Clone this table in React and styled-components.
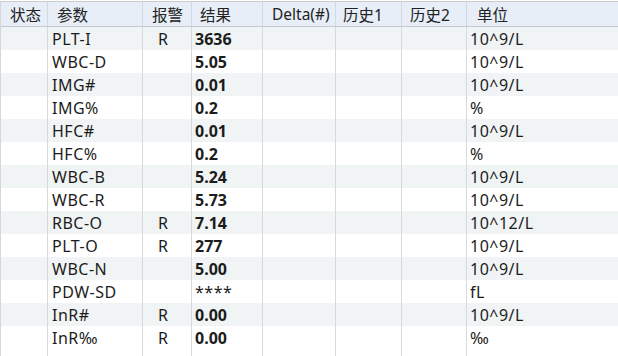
import React from "react";
import styled, { createGlobalStyle } from "styled-components";

const GlobalStyle = createGlobalStyle`
  html, body {
    margin: 0;
    padding: 0;
    background: #ffffff;
  }
  body {
    font-family: "Noto Sans", "Noto Sans CJK SC", sans-serif;
    color: #1c1c1c;
  }
`;

const COLS = "47px 95px 49px 71px 73px 66px 65px 1fr";

const Grid = styled.div`
  display: flex;
  flex-direction: column;
  width: 618px;
  height: 355px;
  overflow: hidden;
  border-top: 1px solid #c9cdd1;
  border-left: 1px solid #d3d7db;
  box-sizing: border-box;
  margin-top: 1px;
`;

const HeaderRow = styled.div`
  display: grid;
  grid-template-columns: ${COLS};
  flex: 0 0 24px;
  background: #e7eef8;
  border-bottom: 1px solid #c3c8cc;
`;

const HeadCell = styled.div`
  display: flex;
  align-items: center;
  padding-left: ${(p) => p.$pad || 9}px;
  font-size: 15.5px;
  color: #222;
  border-right: 1px solid #d3d9e0;
  white-space: nowrap;
  overflow: hidden;
  &:last-child {
    border-right: none;
  }
`;

const Row = styled.div`
  display: grid;
  grid-template-columns: ${COLS};
  flex: ${(p) => (p.$fill ? "1 1 auto" : "0 0 23px")};
  background: ${(p) => (p.$alt ? "#f1f4f4" : "#ffffff")};
`;

const Cell = styled.div`
  display: flex;
  align-items: center;
  padding-left: ${(p) => p.$pad || 4}px;
  font-size: 16px;
  font-weight: ${(p) => (p.$bold ? 700 : 400)};
  letter-spacing: ${(p) => (p.$bold ? 0 : 0.5)}px;
  border-right: 1px solid #d6dada;
  white-space: nowrap;
  overflow: hidden;
  &:last-child {
    border-right: none;
  }
`;

const headers = [
  { t: "状态", pad: 9 },
  { t: "参数", pad: 9 },
  { t: "报警", pad: 9 },
  { t: "结果", pad: 8 },
  { t: "Delta(#)", pad: 9 },
  { t: "历史1", pad: 7 },
  { t: "历史2", pad: 8 },
  { t: "单位", pad: 10 },
];

const rows = [
  ["PLT-I", "R", "3636", "10^9/L"],
  ["WBC-D", "", "5.05", "10^9/L"],
  ["IMG#", "", "0.01", "10^9/L"],
  ["IMG%", "", "0.2", "%"],
  ["HFC#", "", "0.01", "10^9/L"],
  ["HFC%", "", "0.2", "%"],
  ["WBC-B", "", "5.24", "10^9/L"],
  ["WBC-R", "", "5.73", "10^9/L"],
  ["RBC-O", "R", "7.14", "10^12/L"],
  ["PLT-O", "R", "277", "10^9/L"],
  ["WBC-N", "", "5.00", "10^9/L"],
  ["PDW-SD", "", "****", "fL"],
  ["InR#", "R", "0.00", "10^9/L"],
  ["InR‰", "R", "0.00", "‰"],
];

export default function App() {
  return (
    <>
      <GlobalStyle />
      <Grid>
        <HeaderRow>
          {headers.map((h) => (
            <HeadCell key={h.t} $pad={h.pad}>
              {h.t}
            </HeadCell>
          ))}
        </HeaderRow>
        {rows.map(([name, flag, result, unit], i) => (
          <Row key={name} $alt={i % 2 === 0}>
            <Cell />
            <Cell $pad={4}>{name}</Cell>
            <Cell $pad={15}>{flag}</Cell>
            <Cell $pad={3} $bold={result !== "****"}>
              {result}
            </Cell>
            <Cell />
            <Cell />
            <Cell />
            <Cell $pad={3}>{unit}</Cell>
          </Row>
        ))}
        <Row $fill>
          {headers.map((h) => (
            <Cell key={h.t} />
          ))}
        </Row>
      </Grid>
    </>
  );
}
